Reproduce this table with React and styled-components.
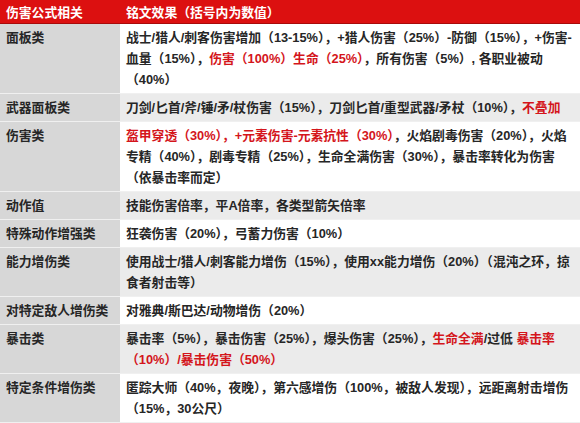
import React from "react";
import styled, { createGlobalStyle } from "styled-components";

const GlobalStyle = createGlobalStyle`
  html, body {
    margin: 0;
    padding: 0;
    background: #ffffff;
  }
  body {
    font-family: "Liberation Sans", "Noto Sans CJK SC", sans-serif;
  }
`;

// segments: plain string, or { r: text } for red highlight
const rows = [
  {
    name: "面板类",
    parts: [
      "战士/猎人/刺客伤害增加（13-15%），+猎人伤害（25%）-防御（15%），+伤害-血量（15%），",
      { r: "伤害（100%）生命（25%）" },
      "，所有伤害（5%）, 各职业被动（40%）",
    ],
  },
  {
    name: "武器面板类",
    parts: ["刀剑/匕首/斧/锤/矛/杖伤害（15%），刀剑匕首/重型武器/矛杖（10%），", { r: "不叠加" }],
  },
  {
    name: "伤害类",
    parts: [
      { r: "盔甲穿透（30%），+元素伤害-元素抗性（30%）" },
      "，火焰剧毒伤害（20%），火焰专精（40%），剧毒专精（25%），生命全满伤害（30%），暴击率转化为伤害（依暴击率而定）",
    ],
  },
  { name: "动作值", parts: ["技能伤害倍率，平A倍率，各类型箭矢倍率"] },
  { name: "特殊动作增强类", parts: ["狂袭伤害（20%），弓蓄力伤害（10%）"] },
  {
    name: "能力增伤类",
    parts: ["使用战士/猎人/刺客能力增伤（15%），使用xx能力增伤（20%）（混沌之环，掠食者射击等）"],
  },
  { name: "对特定敌人增伤类", parts: ["对雅典/斯巴达/动物增伤（20%）"] },
  {
    name: "暴击类",
    parts: [
      "暴击率（5%），暴击伤害（25%），爆头伤害（25%），",
      { r: "生命全满" },
      "/过低 ",
      { r: "暴击率（10%）/暴击伤害（50%）" },
    ],
  },
  {
    name: "特定条件增伤类",
    parts: ["匿踪大师（40%，夜晚），第六感增伤（100%，被敌人发现），远距离射击增伤（15%，30公尺）"],
  },
];

export default function App() {
  return (
    <>
      <GlobalStyle />
      <Table>
        <HeadRow>
          <HeadCell>伤害公式相关</HeadCell>
          <HeadCell>铭文效果（括号内为数值）</HeadCell>
        </HeadRow>
        {rows.map((row, i) => (
          <Row key={row.name}>
            <NameCell>{row.name}</NameCell>
            <ValueCell $shaded={i % 2 === 1}>
              {row.parts.map((p, j) =>
                typeof p === "string" ? <span key={j}>{p}</span> : <Red key={j}>{p.r}</Red>
              )}
            </ValueCell>
          </Row>
        ))}
      </Table>
    </>
  );
}

const Table = styled.div`
  width: 580px;
  height: 423px;
  overflow: hidden;
  display: flex;
  flex-direction: column;
  font-size: 12.8px;
  font-weight: 700;
  color: #262626;
`;

const HeadRow = styled.div`
  display: grid;
  grid-template-columns: 120px 1fr;
  height: 26px;
  background: #dc1010;
  border-bottom: 1px solid #a80a0a;
  box-sizing: border-box;
`;

const HeadCell = styled.div`
  display: flex;
  align-items: center;
  padding: 0 6px;
  color: #ffffff;
`;

const Row = styled.div`
  display: grid;
  grid-template-columns: 120px 1fr;
  border-bottom: 1px solid #f0f0f0;
`;

const NameCell = styled.div`
  background: #d7d7d7;
  padding: 3px 6px;
  line-height: 21px;
`;

const ValueCell = styled.div`
  background: ${(p) => (p.$shaded ? "#ebebeb" : "#ffffff")};
  padding: 3px 4px 3px 6px;
  line-height: 21px;
`;

const Red = styled.span`
  color: #d4151b;
`;
